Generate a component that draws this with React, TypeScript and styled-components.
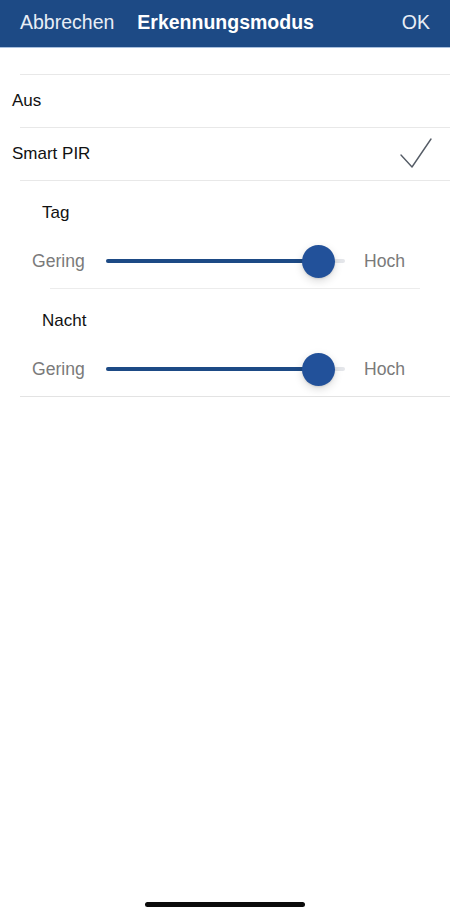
import React from "react";
import styled, { createGlobalStyle } from "styled-components";

const GlobalStyle = createGlobalStyle`
  html, body {
    margin: 0;
    padding: 0;
    background: #ffffff;
  }
  body {
    font-family: "Liberation Sans", Arial, sans-serif;
    -webkit-font-smoothing: antialiased;
  }
`;

const Screen = styled.div`
  position: relative;
  width: 450px;
  height: 916px;
  background: #ffffff;
  overflow: hidden;
`;

const NavBar = styled.header`
  box-sizing: border-box;
  height: 48px;
  background: #1d4a85;
  border-bottom: 1px solid #a9c0de;
  display: flex;
  align-items: center;
  padding: 0 20px 3px;
  color: #ffffff;
  font-size: 19.5px;
`;

const NavButton = styled.span`
  font-weight: 400;
  color: #e9eef6;
`;

const NavTitle = styled.span`
  font-weight: 700;
  margin-left: 23px;
  flex: 1;
`;

const List = styled.div`
  padding-top: 26px;
`;

const Row = styled.div`
  display: flex;
  align-items: center;
  justify-content: space-between;
  height: 52px;
  margin-left: 20px;
  border-top: 1px solid #e8e8e8;
  padding: 0 20px 0 0;
  font-size: 17px;
  color: #111111;
`;

const RowLabel = styled.span`
  margin-left: -8px;
`;

const Group = styled.div`
  margin-left: 20px;
  border-top: 1px solid #e8e8e8;
  border-bottom: 1px solid #e3e3e3;
`;

const Section = styled.div`
  padding-left: 12px;
`;

const Divider = styled.div`
  height: 1px;
  margin: 0 30px;
  background: #ececec;
`;

const SectionTitle = styled.div`
  font-size: 17px;
  color: #111111;
  padding: 22px 0 0 10px;
  height: 31px;
`;

const SliderRow = styled.div`
  display: flex;
  align-items: center;
  height: 54px;
  font-size: 17.6px;
  color: #7a7a7a;
`;

const EdgeLabel = styled.span<{ $w: number }>`
  width: ${(p) => p.$w}px;
`;

const Track = styled.div`
  position: relative;
  width: 239px;
  height: 4px;
  margin: 0 19px 0 20px;
  border-radius: 2px;
  background: #e4e6ea;
`;

const Fill = styled.div`
  height: 100%;
  background: #1d4a85;
  border-radius: 2px;
`;

const Thumb = styled.div`
  position: absolute;
  top: 50%;
  width: 33px;
  height: 33px;
  margin: -16.5px 0 0 -16.5px;
  border-radius: 50%;
  background: #22519a;
  box-shadow: 0 3px 8px rgba(0, 0, 0, 0.15), 0 1px 2px rgba(0, 0, 0, 0.1);
`;

const HomeIndicator = styled.div`
  position: absolute;
  left: 145px;
  bottom: 9px;
  width: 160px;
  height: 5px;
  border-radius: 3px;
  background: #0b0b0b;
`;

const Check = () => (
  <svg width="34" height="32" viewBox="0 0 34 32" style={{ marginRight: -2 }}>
    <path d="M3 17 L14 29 L33 1" fill="none" stroke="#555c66" strokeWidth="1.4" strokeLinecap="round" strokeLinejoin="round" />
  </svg>
);

const Slider = ({ value }: { value: number }) => (
  <SliderRow>
    <EdgeLabel $w={54}>Gering</EdgeLabel>
    <Track>
      <Fill style={{ width: `${value}%` }} />
      <Thumb style={{ left: `${value}%` }} />
    </Track>
    <EdgeLabel $w={44}>Hoch</EdgeLabel>
  </SliderRow>
);

export default function App() {
  return (
    <>
      <GlobalStyle />
      <Screen>
        <NavBar>
          <NavButton>Abbrechen</NavButton>
          <NavTitle>Erkennungsmodus</NavTitle>
          <NavButton>OK</NavButton>
        </NavBar>
        <List>
          <Row>
            <RowLabel>Aus</RowLabel>
          </Row>
          <Row>
            <RowLabel>Smart PIR</RowLabel>
            <Check />
          </Row>
          <Group>
            <Section>
              <SectionTitle>Tag</SectionTitle>
              <Slider value={89} />
            </Section>
            <Divider />
            <Section>
              <SectionTitle>Nacht</SectionTitle>
              <Slider value={89} />
            </Section>
          </Group>
        </List>
        <HomeIndicator />
      </Screen>
    </>
  );
}
